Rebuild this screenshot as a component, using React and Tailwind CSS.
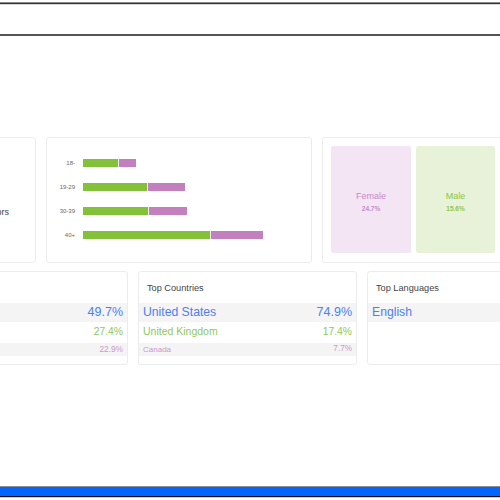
export default function App() {
  const font = { fontFamily: '"Liberation Sans", Arial, sans-serif' };
  const bars = [
    { label: "18-", g: 35, p: 17 },
    { label: "19-29", g: 64, p: 37 },
    { label: "30-39", g: 65, p: 38 },
    { label: "40+", g: 127, p: 52 },
  ];
  return (
    <div className="w-[500px] h-[500px] bg-white flex flex-col overflow-hidden" style={font}>
      <div className="h-[2px] bg-white shrink-0" />
      <div className="h-[1px] bg-[#8a8a8a] shrink-0" />
      <div className="h-[1px] bg-[#333333] shrink-0" />
      <div className="h-[1px] bg-[#d8d8d8] shrink-0" />
      <div className="h-[29px] bg-white shrink-0" />
      <div className="h-[2px] bg-[#555555] shrink-0" />

      <div className="flex-1 flex flex-col pt-[101px]">
        {/* Row 1 */}
        <div className="flex gap-[10px] ml-[-164px] h-[126px] shrink-0">
          <div className="w-[200px] shrink-0 border border-[#ececec] rounded-[3px] flex flex-col items-end pt-[68px] pr-[26px]">
            <div className="text-[9px] leading-[12px] text-[#444]">Visitors</div>
          </div>
          <div className="w-[266px] shrink-0 border border-[#ececec] rounded-[3px] flex flex-col gap-[16px] pt-[21px]">
            {bars.map((b) => (
              <div key={b.label} className="flex items-center h-[8px]">
                <div className="w-[28px] text-right text-[6px] leading-[8px] text-[#666]">{b.label}</div>
                <div className="flex ml-[8px] h-[8px]">
                  <div className="bg-[#84c13a] h-full" style={{ width: b.g }} />
                  <div className="w-[1px] bg-[#e8f0e0] h-full" />
                  <div className="bg-[#c47fbf] h-full" style={{ width: b.p }} />
                </div>
              </div>
            ))}
          </div>
          <div className="w-[300px] shrink-0 border border-[#ececec] rounded-[3px] flex gap-[5px] p-[8px] pb-[9px]">
            <div className="w-[80px] shrink-0 bg-[#f3e5f3] rounded-[2px] flex flex-col items-center justify-center pt-[4px]">
              <div className="text-[9px] leading-[12px] text-[#c98ac6]">Female</div>
              <div className="text-[6.5px] leading-[8px] font-bold text-[#c98ac6] mt-[3px]">24.7%</div>
            </div>
            <div className="w-[79px] shrink-0 bg-[#e8f2d9] rounded-[2px] flex flex-col items-center justify-center pt-[4px]">
              <div className="text-[9px] leading-[12px] text-[#8cc646]">Male</div>
              <div className="text-[6.5px] leading-[8px] font-bold text-[#8cc646] mt-[3px]">15.6%</div>
            </div>
            <div className="w-[80px] shrink-0 bg-[#eeeeee] rounded-[2px]" />
          </div>
        </div>

        {/* Row 2 */}
        <div className="flex gap-[10px] ml-[-91px] mt-[8px] h-[94px] shrink-0">
          <div className="w-[219px] shrink-0 border border-[#ececec] rounded-[3px] flex flex-col pt-[31px]">
            <div className="h-[19px] bg-[#f4f4f4] flex items-center justify-end pr-[4px] text-[12.5px] text-[#4e7ff5]">49.7%</div>
            <div className="h-[20px] flex items-center justify-end pr-[4px] text-[10.3px] text-[#8fc85a]">27.4%</div>
            <div className="h-[13px] mt-[1px] bg-[#f4f4f4] flex items-center justify-end pr-[4px] text-[8.3px] text-[#cf96cc]">22.9%</div>
          </div>
          <div className="w-[219px] shrink-0 border border-[#ececec] rounded-[3px] flex flex-col">
            <div className="h-[31px] flex items-center pl-[8px] pt-[2px] text-[9.2px] text-[#444]">Top Countries</div>
            <div className="h-[19px] bg-[#f4f4f4] flex items-center justify-between px-[4px]">
              <span className="text-[12.2px] text-[#4e7ff5]">United States</span>
              <span className="text-[12.5px] text-[#4e7ff5]">74.9%</span>
            </div>
            <div className="h-[20px] flex items-center justify-between px-[4px]">
              <span className="text-[10.5px] text-[#8fc85a]">United Kingdom</span>
              <span className="text-[10.3px] text-[#8fc85a]">17.4%</span>
            </div>
            <div className="h-[13px] mt-[1px] bg-[#f4f4f4] flex items-center justify-between px-[4px]">
              <span className="text-[8px] text-[#cf96cc]">Canada</span>
              <span className="text-[8.2px] text-[#cf96cc]">7.7%</span>
            </div>
          </div>
          <div className="w-[219px] shrink-0 border border-[#ececec] rounded-[3px] flex flex-col">
            <div className="h-[31px] flex items-center pl-[8px] pt-[2px] text-[9.2px] text-[#444]">Top Languages</div>
            <div className="h-[19px] bg-[#f4f4f4] flex items-center px-[4px]">
              <span className="text-[12.2px] text-[#4e7ff5]">English</span>
            </div>
          </div>
        </div>
        <div className="flex-1" />
      </div>

      <div className="h-[1px] bg-[#8a8a8a] shrink-0" />
      <div className="h-[9px] bg-[#0066ff] shrink-0" />
      <div className="h-[1px] bg-[#111111] shrink-0" />
      <div className="h-[1px] bg-[#cccccc] shrink-0" />
      <div className="h-[2px] bg-white shrink-0" />
    </div>
  );
}
